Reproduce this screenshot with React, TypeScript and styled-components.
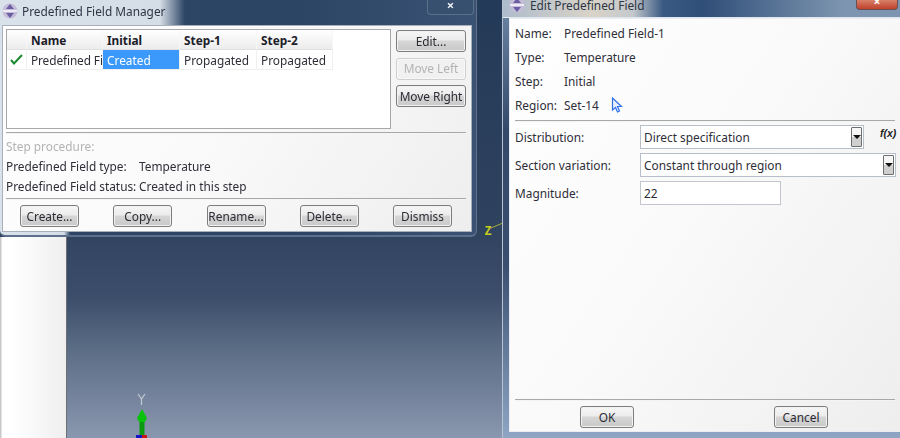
import React from "react";
import styled, { createGlobalStyle } from "styled-components";

const Global = createGlobalStyle`
  html, body { margin: 0; padding: 0; background: #33445e; }
  #root { width: 900px; height: 438px; overflow: hidden; }
  * { box-sizing: border-box; }
`;

const Desktop = styled.div`
  position: relative;
  width: 900px;
  height: 438px;
  display: flex;
  overflow: hidden;
  font-family: "Noto Sans", "Open Sans", sans-serif;
  font-size: 11.85px;
  color: #2e2e38;
  filter: blur(0.35px);
`;
const SidePanel = styled.div`
  width: 67px;
  margin-top: 237px;
  background: linear-gradient(90deg, #c8c8c8 0, #c8c8c8 1px, #ffffff 2px, #ffffff 12px, #efefef 65px);
  border-right: 1px solid #6d6f74;
`;
const Viewport = styled.div`
  flex: 1;
  background: linear-gradient(180deg, #233a58 0%, #2f425e 52%, #3d4e6b 68%, #5c6d86 80%, #8a98af 100%);
`;
const WindowFrame = styled.section<{ $left: number; $width: number; $height: number }>`
  position: absolute;
  left: ${(p) => p.$left}px;
  top: 0;
  width: ${(p) => p.$width}px;
  height: ${(p) => p.$height}px;
  display: flex;
  flex-direction: column;
`;
const ManagerFrame = styled(WindowFrame)`
  padding: 0 4px 3px 2px;
  border-radius: 0 0 6px 6px;
  background: linear-gradient(90deg, #d9e2ea 0, #d5dde6 64px, #2d4666 70px, #2c4565 300px, #3a5273 100%);
  border-right: 1px solid #627089;
  border-bottom: 2px solid #5c6f8c;
`;
const EditFrame = styled(WindowFrame)`
  padding: 0 0 6px 6px;
  background: linear-gradient(180deg, #6f88a8 0, #34496a 30%, #3a4f70 60%, #8ea6c4 100%);
  border-left: 1px solid #b7c3d2;
`;
const ManagerTitle = styled.header`
  position: relative;
  height: 25px;
  flex: none;
  display: flex;
  align-items: center;
  gap: 4px;
  margin-left: -2px;
  padding: 0 0 4px 2px;
  background: linear-gradient(90deg, #d9e2ea 0, #d5dde6 160px, rgba(213, 221, 230, 0) 185px);
`;
const EditTitle = styled.header`
  position: relative;
  height: 18px;
  flex: none;
  display: flex;
  align-items: center;
  gap: 5px;
  margin-left: -6px;
  padding: 0 0 8px 6px;
  background: linear-gradient(90deg, #aebccb 0, #d9d3c8 90px, #c4c8cc 130px, #3a5a84 160px, #2f4e78 200px, #7d95b0 340px, #7d95b0 100%);
  border-bottom: 1px solid #dfe6ee;
`;
const TitleText = styled.h1`
  margin: 0;
  font: inherit;
  color: #2d3644;
`;
const CloseGhost = styled.div`
  position: absolute;
  right: -2px;
  top: 0;
  width: 47px;
  height: 15px;
  border: 1px solid #5a7088;
  border-top: 0;
  border-radius: 0 0 4px 4px;
  background: #38506f;
  color: #eef2f6;
  font-size: 13px;
  font-weight: 700;
  line-height: 11px;
  text-align: center;
`;
const CloseRed = styled.div`
  position: absolute;
  right: 2px;
  top: 0;
  width: 42px;
  height: 10px;
  border: 1px solid #6a4f50;
  border-top: 0;
  border-radius: 0 0 4px 4px;
  background: linear-gradient(180deg, #d8806a, #c0412c);
  color: #fff;
  font-size: 12px;
  font-weight: 700;
  line-height: 4px;
  text-align: center;
  overflow: hidden;
`;
const Body = styled.div`
  flex: 1;
  min-height: 0;
  display: flex;
  flex-direction: column;
  border: 1px solid #a9b0b9;
  background: linear-gradient(125deg, #ffffff 0%, #f9f9f9 50%, #eeeeee 100%);
`;
const ManagerBody = styled(Body)`
  padding: 3px 5px 0 3px;
`;
const TopRow = styled.div`
  display: flex;
  gap: 5px;
  height: 103px;
`;
const TableBox = styled.div`
  width: 386px;
  height: 100px;
  border: 1px solid #a8a8a8;
  background: #fff;
`;
const Table = styled.div`
  display: grid;
  grid-template-columns: 20px 76px 77px 77px 76px;
  width: 326px;
`;
const HeadCell = styled.div`
  height: 20px;
  padding-left: 4px;
  line-height: 21px;
  font-weight: 700;
  color: #1c2029;
  background: linear-gradient(180deg, #ffffff, #ececec);
  border-right: 1px solid #f7f7f7;
  border-bottom: 1px solid #e0e0e0;
`;
const Cell = styled.div<{ $selected?: boolean; $tight?: boolean }>`
  height: 20px;
  padding-left: 4px;
  line-height: 21px;
  white-space: nowrap;
  overflow: hidden;
  letter-spacing: ${(p) => (p.$tight ? "-0.1px" : "normal")};
  border-right: 1px solid #f0f0f0;
  border-bottom: 1px solid #f0f0f0;
  color: ${(p) => (p.$selected ? "#fff" : "#2e2e38")};
  background: ${(p) => (p.$selected ? "#3b99fc" : "#fff")};
`;
const Marker = styled.div`
  height: 20px;
  display: flex;
  align-items: center;
  justify-content: center;
  border-right: 1px solid #f0f0f0;
  border-bottom: 1px solid #f0f0f0;
`;
const SideButtons = styled.div`
  display: flex;
  flex-direction: column;
  gap: 5.5px;
  padding-top: 1px;
`;
const Button = styled.button<{ $w: number; $disabled?: boolean }>`
  width: ${(p) => p.$w}px;
  height: 22px;
  padding: 0 0 1px;
  border: 1px solid ${(p) => (p.$disabled ? "#cfcfcf" : "#7d7d7d")};
  border-radius: 3px;
  font: inherit;
  white-space: nowrap;
  color: ${(p) => (p.$disabled ? "#b3b3b3" : "#2b2b33")};
  background: ${(p) =>
    p.$disabled
      ? "#f1f1f1"
      : "linear-gradient(180deg, #f6f6f6 0%, #ececec 45%, #d6d6d6 50%, #c9c9c9 100%)"};
  box-shadow: inset 0 0 0 1px ${(p) => (p.$disabled ? "#f8f8f8" : "#f2f2f2")};
`;
const Separator = styled.hr`
  width: 100%;
  margin: 0;
  border: 0;
  height: 2px;
  flex: none;
  background: linear-gradient(180deg, #a8a8a8 50%, #f4f4f4 50%);
`;
const InfoBlock = styled.div`
  display: flex;
  flex-direction: column;
  height: 64px;
  padding: 2px 0 0;
`;
const InfoLine = styled.div<{ $muted?: boolean }>`
  height: 20px;
  line-height: 20px;
  white-space: pre;
  color: ${(p) => (p.$muted ? "#b3b3b3" : "#2e2e38")};
`;
const ActionRow = styled.div`
  display: flex;
  justify-content: space-between;
  padding: 5px 14px 0 14px;
`;
const InfoLabel = styled.span`
  display: inline-block;
  width: 133px;
`;
const EditBody = styled(Body)`
  padding: 4px 5px 0 5px;
  border-color: #e9edf2;
  border-width: 1px 0 1px 1px;
`;
const MetaRow = styled.div`
  display: grid;
  grid-template-columns: 49px 1fr;
  height: 24px;
  line-height: 20px;
`;
const MetaBlock = styled.div`
  height: 97px;
`;
const FieldRows = styled.div`
  flex: 1;
  display: flex;
  flex-direction: column;
  gap: 4px;
  padding-top: 3px;
`;
const FieldRow = styled.div`
  display: grid;
  grid-template-columns: 125px 1fr;
  align-items: center;
  height: 24px;
  position: relative;
`;
const SelectBox = styled.div<{ $w: number }>`
  width: ${(p) => p.$w}px;
  height: 24px;
  display: flex;
  align-items: center;
  justify-content: space-between;
  padding: 0 1px 0 3px;
  background: #fff;
  border: 1px solid #b9bfc8;
`;
const Arrow = styled.span`
  width: 11px;
  height: 20px;
  display: flex;
  align-items: center;
  justify-content: center;
  border: 1px solid #6e6e6e;
  border-radius: 1px;
  background: linear-gradient(180deg, #f6f6f6 50%, #cfcfcf 50%);
  &::after {
    content: "";
    border-left: 4px solid transparent;
    border-right: 4px solid transparent;
    border-top: 4px solid #111;
  }
`;
const FxLabel = styled.span`
  position: absolute;
  left: 365px;
  top: 2px;
  font-family: "Liberation Sans", sans-serif;
  font-style: italic;
  font-weight: 700;
  font-size: 10.5px;
  color: #222;
`;
const TextInput = styled.div`
  width: 141px;
  height: 24px;
  padding-left: 3px;
  line-height: 22px;
  background: #fff;
  border: 1px solid #c3c7cd;
`;
const BottomRow = styled.div`
  display: flex;
  gap: 140px;
  padding: 5px 0 3px 65px;
`;
const OverlayArt = styled.svg<{ $l: number; $t: number }>`
  position: absolute;
  left: ${(p) => p.$l}px;
  top: ${(p) => p.$t}px;
`;

const AppIcon = () => (
  <svg width="16" height="16" viewBox="0 0 16 16" style={{ flex: "none" }}>
    <circle cx="8" cy="8" r="7.5" fill="#c3bdd8" />
    <path d="M8 1 L12 6 H4 Z" fill="#6d5ea3" />
    <path d="M8 15 L12 10 H4 Z" fill="#6d5ea3" />
    <rect x="1" y="7" width="14" height="2" fill="#eeeaf5" />
  </svg>
);

const Check = () => (
  <svg width="13" height="11" viewBox="0 0 13 11">
    <path d="M1 6 L4 9.5 L12 1" fill="none" stroke="#1c8a2e" strokeWidth="2" />
  </svg>
);

export default function App() {
  return (
    <Desktop>
      <Global />
      <SidePanel />
      <Viewport />

      <OverlayArt $l={130} $t={392} width="24" height="46" viewBox="0 0 24 46">
        <path d="M8 2 L11.5 7 M15 2 L11.5 7 V13" fill="none" stroke="#c4cad6" strokeWidth="1.2" />
        <rect x="9.5" y="28" width="5" height="16" fill="#0a9a10" />
        <path d="M12 17 L17 26 L15 30 H9 L7 26 Z" fill="#08c20e" />
        <rect x="6" y="43" width="6" height="3" fill="#1616c8" />
        <rect x="12" y="43" width="5" height="3" fill="#c81616" />
      </OverlayArt>

      <OverlayArt $l={482} $t={222} width="22" height="16" viewBox="0 0 22 16">
        <path d="M9 6 L21 1" stroke="#a9ad3c" strokeWidth="1" />
        <text x="2.5" y="13" fontSize="12" fontWeight="700" fill="#c9cf1e" fontFamily="Liberation Mono, monospace">Z</text>
      </OverlayArt>

      <ManagerFrame $left={0} $width={477} $height={237}>
        <ManagerTitle>
          <AppIcon />
          <TitleText>Predefined Field Manager</TitleText>
          <CloseGhost>×</CloseGhost>
        </ManagerTitle>
        <ManagerBody>
          <TopRow>
            <TableBox>
              <Table>
                <HeadCell />
                <HeadCell>Name</HeadCell>
                <HeadCell>Initial</HeadCell>
                <HeadCell>Step-1</HeadCell>
                <HeadCell>Step-2</HeadCell>
                <Marker><Check /></Marker>
                <Cell $tight>Predefined Fi</Cell>
                <Cell $selected>Created</Cell>
                <Cell>Propagated</Cell>
                <Cell>Propagated</Cell>
              </Table>
            </TableBox>
            <SideButtons>
              <Button $w={70}>Edit...</Button>
              <Button $w={70} $disabled>Move Left</Button>
              <Button $w={70}>Move Right</Button>
            </SideButtons>
          </TopRow>
          <Separator />
          <InfoBlock>
            <InfoLine $muted>Step procedure:</InfoLine>
            <InfoLine><InfoLabel>Predefined Field type:</InfoLabel>Temperature</InfoLine>
            <InfoLine><InfoLabel>Predefined Field status:</InfoLabel>Created in this step</InfoLine>
          </InfoBlock>
          <Separator />
          <ActionRow>
            <Button $w={59}>Create...</Button>
            <Button $w={59}>Copy...</Button>
            <Button $w={59}>Rename...</Button>
            <Button $w={59}>Delete...</Button>
            <Button $w={59}>Dismiss</Button>
          </ActionRow>
        </ManagerBody>
      </ManagerFrame>

      <EditFrame $left={502} $width={398} $height={438}>
        <EditTitle>
          <AppIcon />
          <TitleText>Edit Predefined Field</TitleText>
          <CloseRed>×</CloseRed>
        </EditTitle>
        <EditBody>
          <MetaBlock>
            <MetaRow><span>Name:</span><span>Predefined Field-1</span></MetaRow>
            <MetaRow><span>Type:</span><span>Temperature</span></MetaRow>
            <MetaRow><span>Step:</span><span>Initial</span></MetaRow>
            <MetaRow><span>Region:</span><span>Set-14</span></MetaRow>
          </MetaBlock>
          <Separator />
          <FieldRows>
            <FieldRow>
              <span>Distribution:</span>
              <SelectBox $w={224}>Direct specification<Arrow /></SelectBox>
              <FxLabel>f(x)</FxLabel>
            </FieldRow>
            <FieldRow>
              <span>Section variation:</span>
              <SelectBox $w={256}>Constant through region<Arrow /></SelectBox>
            </FieldRow>
            <FieldRow>
              <span>Magnitude:</span>
              <TextInput>22</TextInput>
            </FieldRow>
          </FieldRows>
          <Separator />
          <BottomRow>
            <Button $w={54}>OK</Button>
            <Button $w={54}>Cancel</Button>
          </BottomRow>
        </EditBody>
      </EditFrame>

      <OverlayArt $l={611} $t={97} width="12" height="16" viewBox="0 0 12 16">
        <path d="M1.5 1 V13 L4.5 10.5 L6.5 15 L8.5 14 L6.5 9.5 H10.5 Z" fill="#e8f0ff" stroke="#2f6fe8" strokeWidth="1.2" />
      </OverlayArt>
    </Desktop>
  );
}
